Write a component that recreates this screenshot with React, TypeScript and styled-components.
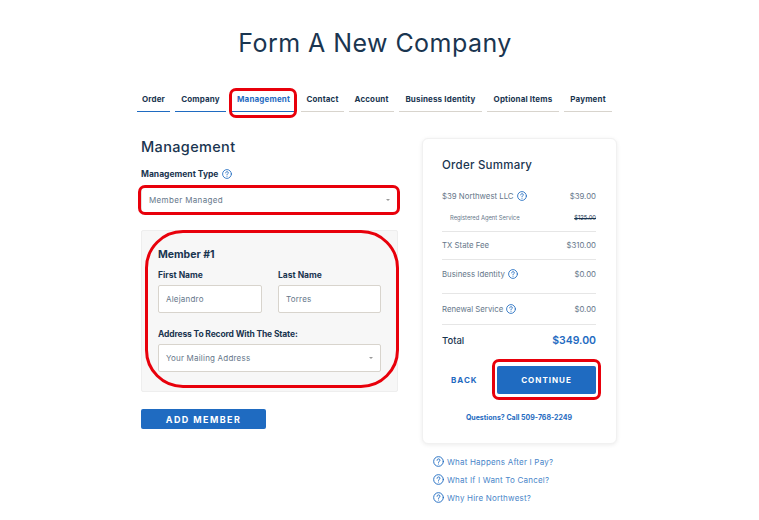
import React from "react";
import styled, { createGlobalStyle } from "styled-components";

const NAVY = "#1a3550";
const BLUE = "#1f6bc1";
const GREY = "#66778a";
const LINE = "#e6e6e6";
const RED = "#e8000b";

const GlobalStyle = createGlobalStyle`
  html, body {
    margin: 0;
    padding: 0;
    background: #fff;
    font-family: Inter, "Open Sans", sans-serif;
    color: ${NAVY};
  }
  * { box-sizing: border-box; }
`;

const Page = styled.div`
  width: 759px;
  height: 520px;
  overflow: hidden;
  padding-top: 28px;
`;

const Title = styled.h1`
  margin: 0;
  height: 30px;
  line-height: 30px;
  text-align: center;
  font-size: 25px;
  font-weight: 400;
  letter-spacing: 0.45px;
  padding-right: 9px;
`;

const Tabs = styled.nav`
  display: flex;
  gap: 5px;
  margin: 33px 0 0 137px;
`;

const Tab = styled.div<{ $w: number; $done?: boolean; $active?: boolean }>`
  position: relative;
  width: ${(p) => p.$w}px;
  height: 21px;
  padding-top: 2px;
  text-align: center;
  font-size: 8px;
  line-height: 12px;
  font-weight: 700;
  letter-spacing: 0.15px;
  white-space: nowrap;
  color: ${(p) => (p.$active ? BLUE : NAVY)};
  border-bottom: 1px solid ${(p) => (p.$done ? BLUE : "#d8d4cd")};
`;

const Highlight = styled.span<{ $t: number; $r: number; $b: number; $l: number; $radius: number }>`
  position: absolute;
  top: ${(p) => p.$t}px;
  right: ${(p) => p.$r}px;
  bottom: ${(p) => p.$b}px;
  left: ${(p) => p.$l}px;
  border: 3px solid ${RED};
  border-radius: ${(p) => p.$radius}px;
  pointer-events: none;
`;

const Columns = styled.div`
  display: flex;
  align-items: flex-start;
  gap: 24px;
  margin: 26px 0 0 141px;
`;

const LeftColumn = styled.main`
  width: 257px;
`;

const RightColumn = styled.aside`
  width: 195px;
`;

const Heading = styled.h2`
  margin: 0;
  height: 18px;
  line-height: 18px;
  font-size: 14.5px;
  font-weight: 500;
  letter-spacing: 0.35px;
`;

const Label = styled.label`
  display: flex;
  align-items: center;
  gap: 4px;
  height: 12px;
  font-size: 8.5px;
  line-height: 12px;
  font-weight: 700;
  white-space: nowrap;
`;

const TypeLabel = styled(Label)`
  margin-top: 12px;
`;

const AddressLabel = styled(Label)`
  letter-spacing: -0.15px;
`;

const Field = styled.div`
  position: relative;
  display: flex;
  align-items: center;
  justify-content: space-between;
  height: 28px;
  padding: 0 7px;
  background: #fff;
  border: 1px solid #d8d4cd;
  border-radius: 2px;
  font-size: 8px;
  color: ${GREY};
  letter-spacing: 0.2px;
`;

const TypeField = styled(Field)`
  height: 26px;
  margin-top: 7px;
  border-color: #e4e1dc;
  letter-spacing: 0.35px;
`;

const Caret = styled.i`
  width: 0;
  height: 0;
  border-left: 2px solid transparent;
  border-right: 2px solid transparent;
  border-top: 2px solid #9a9a9a;
`;

const MemberPanel = styled.section`
  position: relative;
  height: 162px;
  margin-top: 17px;
  padding: 17px 16px 0;
  background: #f7f7f7;
  border: 1px solid #eeeeee;
  border-radius: 2px;
`;

const MemberTitle = styled.h3`
  margin: 0;
  height: 13px;
  line-height: 13px;
  font-size: 10.5px;
  font-weight: 700;
`;

const NameRow = styled.div`
  display: grid;
  grid-template-columns: 104px 103px;
  gap: 16px;
  margin-top: 8px;
`;

const FieldGroup = styled.div`
  display: flex;
  flex-direction: column;
  gap: 4px;
`;

const AddressGroup = styled(FieldGroup)`
  margin-top: 15px;
  width: 223px;
`;

const PrimaryButton = styled.button<{ $w: number; $h: number }>`
  display: block;
  width: ${(p) => p.$w}px;
  height: ${(p) => p.$h}px;
  padding: 0;
  border: 0;
  border-radius: 2px;
  background: ${BLUE};
  color: #fff;
  font-family: inherit;
  font-size: 8px;
  font-weight: 700;
  letter-spacing: 1px;
`;

const AddButton = styled(PrimaryButton)`
  margin-top: 17px;
  font-size: 9px;
  letter-spacing: 1.4px;
`;

const Card = styled.section`
  height: 306px;
  padding: 19px 20px 0 19px;
  background: #fff;
  border: 1px solid #f1f1f1;
  border-radius: 6px;
  box-shadow: 0 1px 4px rgba(0, 0, 0, 0.08);
`;

const CardTitle = styled.h3`
  margin: 0 0 10px;
  height: 14px;
  line-height: 14px;
  font-size: 11.5px;
  font-weight: 500;
  letter-spacing: 0.25px;
`;

const Row = styled.div<{ $h: number; $pb?: number; $line?: boolean }>`
  display: flex;
  align-items: center;
  justify-content: space-between;
  height: ${(p) => p.$h}px;
  padding-bottom: ${(p) => p.$pb ?? 0}px;
  font-size: 7.8px;
  color: ${GREY};
  white-space: nowrap;
  border-bottom: ${(p) => (p.$line ? `1px solid ${LINE}` : "0")};
`;

const RowName = styled.span`
  display: flex;
  align-items: center;
  gap: 3px;
`;

const SubRow = styled(Row)`
  padding-left: 8px;
  font-size: 5.8px;
`;

const Struck = styled.s`
  color: ${NAVY};
`;

const TotalRow = styled(Row)`
  font-size: 9.5px;
  font-weight: 500;
  color: ${NAVY};
`;

const TotalPrice = styled.span`
  color: ${BLUE};
  font-size: 10.5px;
  font-weight: 600;
`;

const Actions = styled.div`
  display: flex;
  align-items: center;
  justify-content: space-between;
  margin-top: 11px;
  padding-left: 9px;
  width: 154px;
`;

const BackLink = styled.a`
  font-size: 8px;
  font-weight: 700;
  letter-spacing: 1px;
  color: ${BLUE};
`;

const ContinueWrap = styled.div`
  position: relative;
`;

const Phone = styled.div`
  margin-top: 18px;
  height: 12px;
  line-height: 12px;
  text-align: center;
  font-size: 7px;
  font-weight: 700;
  color: ${BLUE};
`;

const HelpLinks = styled.ul`
  list-style: none;
  margin: 11px 0 0 11px;
  padding: 0;
  display: flex;
  flex-direction: column;
  gap: 5px;
`;

const HelpLink = styled.li`
  display: flex;
  align-items: center;
  gap: 3px;
  height: 13px;
  font-size: 8px;
  color: #4a86c9;
  letter-spacing: 0.2px;
  white-space: nowrap;
`;

const HelpIcon = ({ size = 10 }: { size?: number }) => (
  <svg width={size} height={size} viewBox="0 0 20 20" fill="none" stroke={BLUE} strokeWidth="1.7" strokeLinecap="round">
    <circle cx="10" cy="10" r="8.8" />
    <path d="M7.4 7.8c0-1.5 1.2-2.5 2.7-2.5s2.6 1 2.6 2.3c0 1.1-.6 1.7-1.5 2.2-.8.5-1.2 1-1.2 1.9" />
    <path d="M10 14.6v.1" />
  </svg>
);

const tabs = [
  { name: "Order", w: 33, done: true },
  { name: "Company", w: 51, done: true },
  { name: "Management", w: 65, done: true, active: true },
  { name: "Contact", w: 43 },
  { name: "Account", w: 45 },
  { name: "Business Identity", w: 83 },
  { name: "Optional Items", w: 72 },
  { name: "Payment", w: 48 },
];

const helpLinks = ["What Happens After I Pay?", "What If I Want To Cancel?", "Why Hire Northwest?"];

export default function App() {
  return (
    <Page>
      <GlobalStyle />
      <Title>Form A New Company</Title>
      <Tabs>
        {tabs.map((t) => (
          <Tab key={t.name} $w={t.w} $done={t.done} $active={t.active}>
            {t.name}
            {t.active && <Highlight $t={-3} $r={-1} $b={-7} $l={-2} $radius={7} />}
          </Tab>
        ))}
      </Tabs>
      <Columns>
        <LeftColumn>
          <Heading>Management</Heading>
          <TypeLabel>
            Management Type <HelpIcon />
          </TypeLabel>
          <TypeField>
            Member Managed
            <Caret />
            <Highlight $t={-3} $r={-3} $b={-3} $l={-4} $radius={7} />
          </TypeField>
          <MemberPanel>
            <MemberTitle>Member #1</MemberTitle>
            <NameRow>
              <FieldGroup>
                <Label>First Name</Label>
                <Field>Alejandro</Field>
              </FieldGroup>
              <FieldGroup>
                <Label>Last Name</Label>
                <Field>Torres</Field>
              </FieldGroup>
            </NameRow>
            <AddressGroup>
              <AddressLabel>Address To Record With The State:</AddressLabel>
              <Field>
                Your Mailing Address
                <Caret />
              </Field>
            </AddressGroup>
            <Highlight $t={-1} $r={-2} $b={3} $l={3} $radius={38} />
          </MemberPanel>
          <AddButton $w={125} $h={20}>ADD MEMBER</AddButton>
        </LeftColumn>
        <RightColumn>
          <Card>
            <CardTitle>Order Summary</CardTitle>
            <Row $h={28}>
              <RowName>
                $39 Northwest LLC <HelpIcon />
              </RowName>
              <span>$39.00</span>
            </Row>
            <SubRow $h={22} $pb={7} $line>
              <span>Registered Agent Service</span>
              <Struck>$125.00</Struck>
            </SubRow>
            <Row $h={28} $pb={2} $line>
              <span>TX State Fee</span>
              <span>$310.00</span>
            </Row>
            <Row $h={34} $pb={5} $line>
              <RowName>
                Business Identity <HelpIcon />
              </RowName>
              <span>$0.00</span>
            </Row>
            <Row $h={31} $line>
              <RowName>
                Renewal Service <HelpIcon />
              </RowName>
              <span>$0.00</span>
            </Row>
            <TotalRow $h={30}>
              <span>Total</span>
              <TotalPrice>$349.00</TotalPrice>
            </TotalRow>
            <Actions>
              <BackLink>BACK</BackLink>
              <ContinueWrap>
                <PrimaryButton $w={99} $h={28}>CONTINUE</PrimaryButton>
                <Highlight $t={-7} $r={-5} $b={-6} $l={-5} $radius={7} />
              </ContinueWrap>
            </Actions>
            <Phone>Questions? Call 509-768-2249</Phone>
          </Card>
          <HelpLinks>
            {helpLinks.map((l) => (
              <HelpLink key={l}>
                <HelpIcon size={11} />
                {l}
              </HelpLink>
            ))}
          </HelpLinks>
        </RightColumn>
      </Columns>
    </Page>
  );
}
